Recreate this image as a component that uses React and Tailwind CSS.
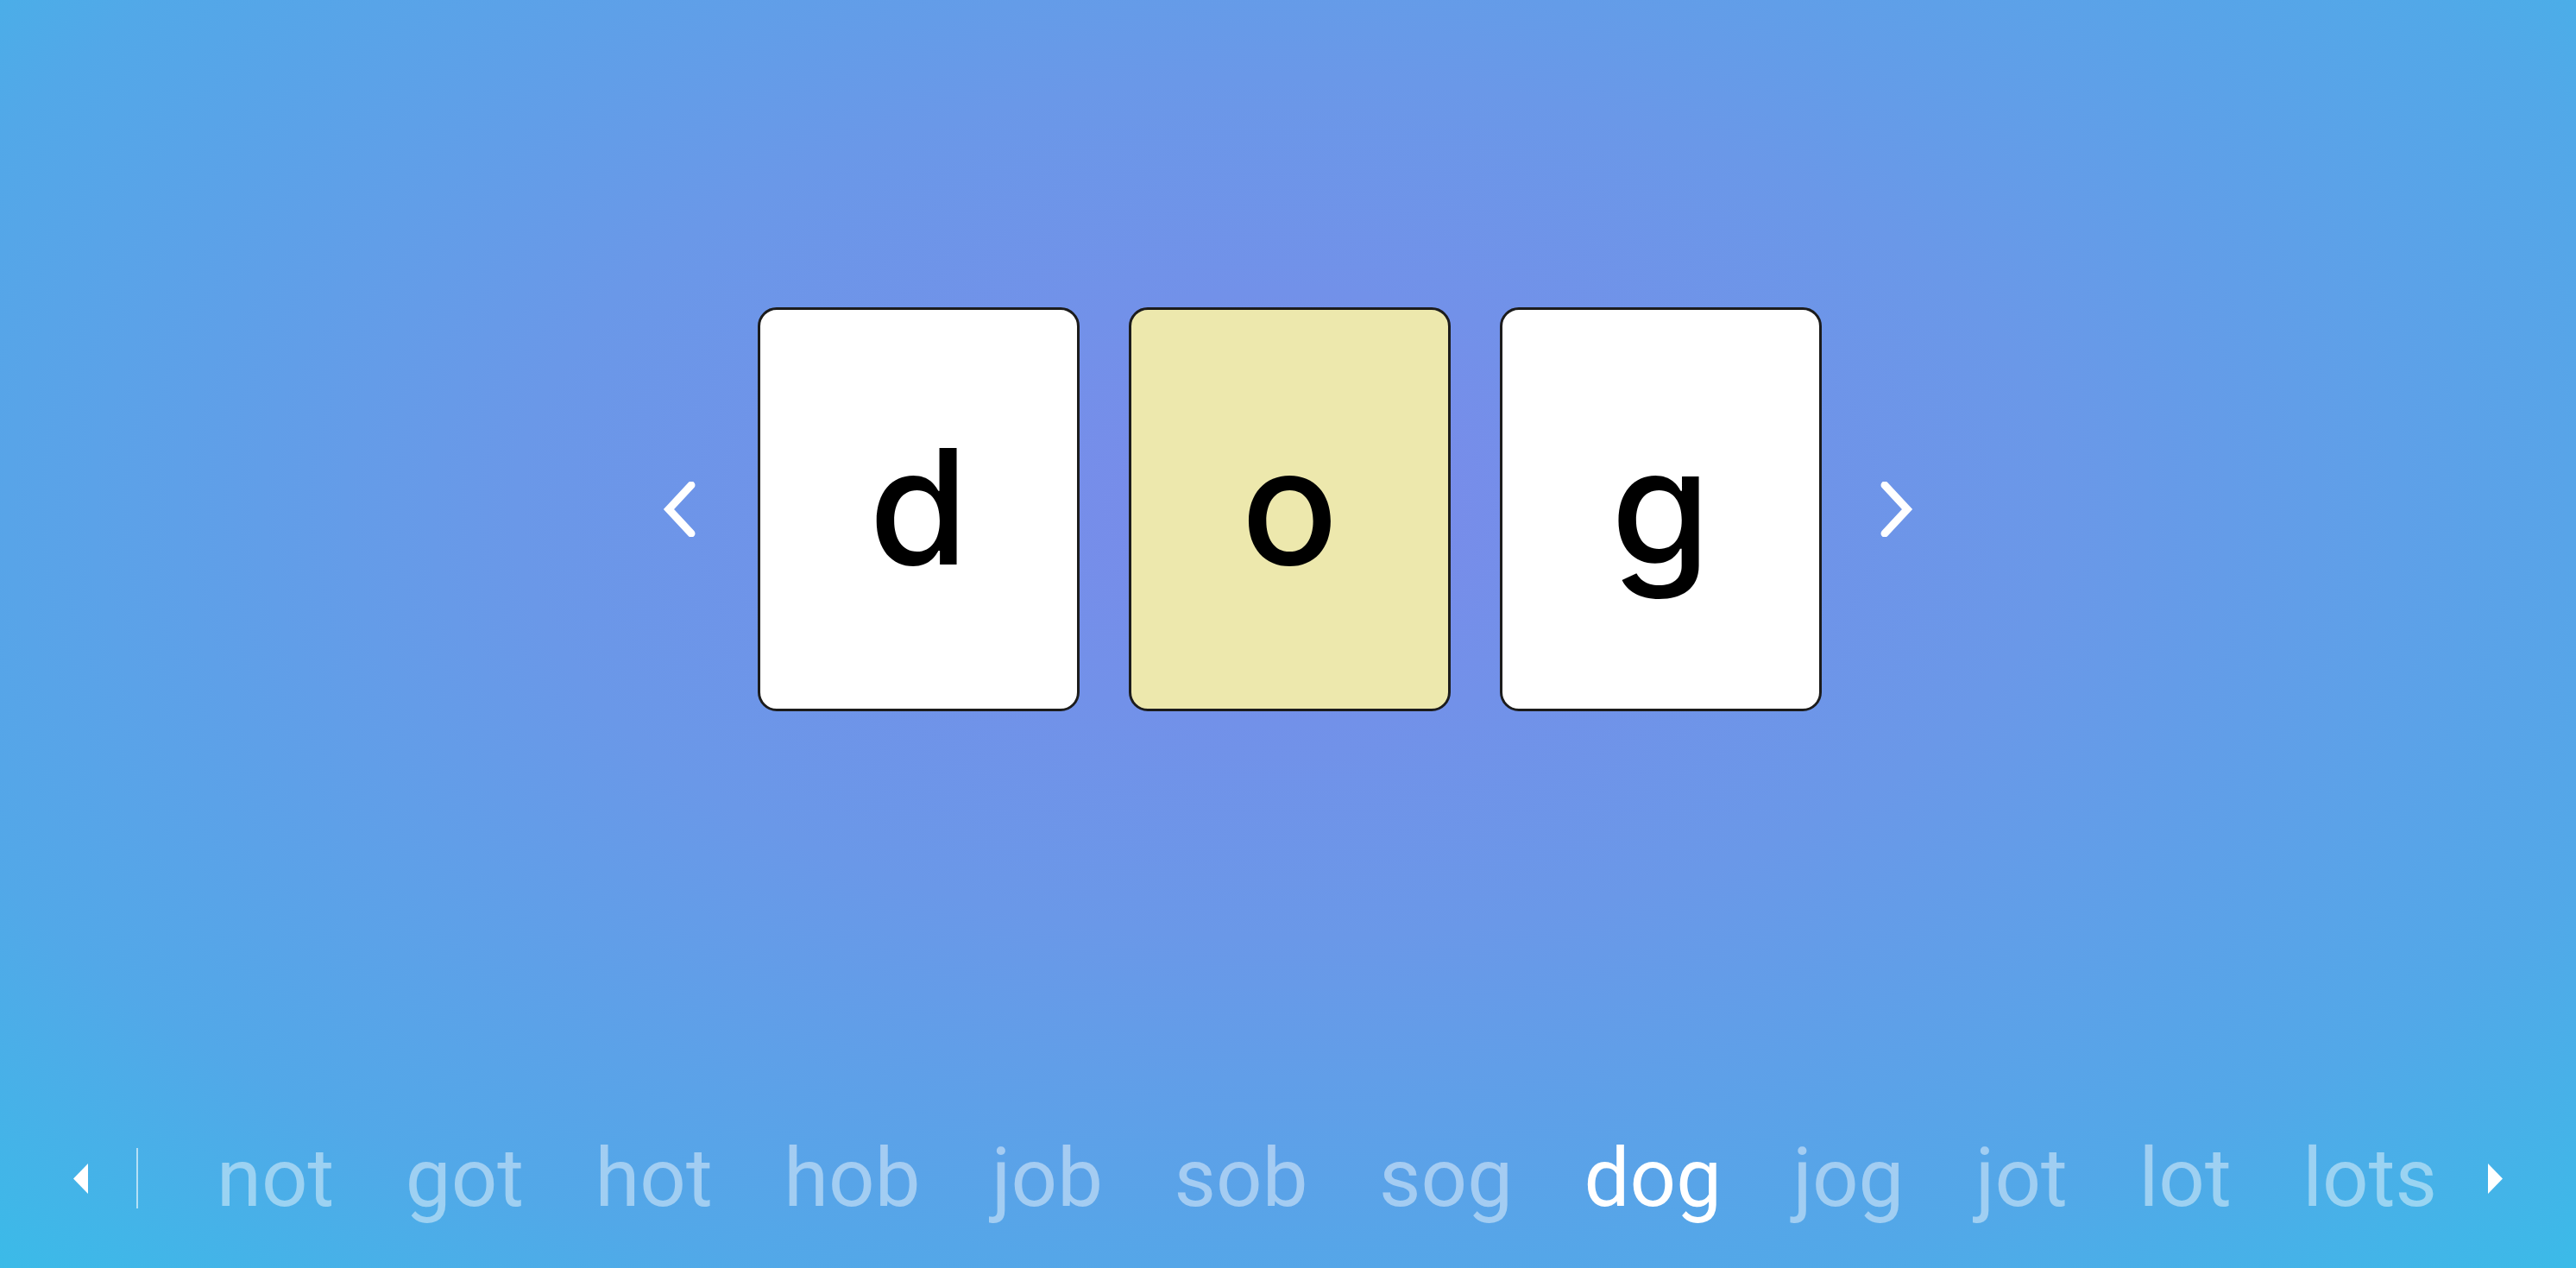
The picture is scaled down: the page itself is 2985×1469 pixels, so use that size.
import React, { useState } from 'react'

const words = ['not', 'got', 'hot', 'hob', 'job', 'sob', 'sog', 'dog', 'jog', 'jot', 'lot', 'lots']

function Chevron({ dir }) {
  const pts = dir === 'left' ? '33,4 7,32 33,60' : '7,4 33,32 7,60'
  return (
    <svg width="40" height="64" viewBox="0 0 40 64" className="shrink-0">
      <polyline points={pts} fill="none" stroke="white" strokeWidth="9" strokeLinecap="round" strokeLinejoin="miter" />
    </svg>
  )
}

function Arrow({ dir }) {
  const pts = dir === 'left' ? '17,0 0,17.5 17,35' : '0,0 17,17.5 0,35'
  return (
    <svg width="17" height="35" viewBox="0 0 17 35" className="shrink-0">
      <polygon points={pts} fill="white" />
    </svg>
  )
}

function Card({ letter, active }) {
  return (
    <div
      className={`w-[373px] h-[468px] rounded-[22px] border-[3px] border-[#1c1c1c] flex items-center justify-center ${active ? 'bg-[#ede8ad]' : 'bg-white'}`}
    >
      <span className="text-[186px] leading-none font-medium text-black font-['Inter',sans-serif] -mt-[6px]">{letter}</span>
    </div>
  )
}

export default function App() {
  const [current] = useState('dog')
  const letters = current.split('')

  return (
    <div className="w-full h-[1469px] flex flex-col overflow-hidden bg-[radial-gradient(ellipse_75%_85%_at_50%_40%,#7a8aea_0%,#6a98e8_40%,#52a8e8_75%,#38bde8_100%)]">
      <div className="h-[1180px] flex items-center justify-center">
        <div className="flex items-center">
          <Chevron dir="left" />
          <div className="flex gap-[57px] ml-[70px] mr-[66px]">
            {letters.map((l, i) => (
              <Card key={i} letter={l} active={i === 1} />
            ))}
          </div>
          <Chevron dir="right" />
        </div>
      </div>

      <div className="mt-[115px] h-[140px] flex items-center pl-[85px] pr-[85px] font-['Roboto',sans-serif]">
        <Arrow dir="left" />
        <div className="ml-[56px] w-[2px] h-[70px] bg-white/60"></div>
        <div className="flex-1 flex justify-between ml-[91px] mr-[59px]">
          {words.map((w) => (
            <span key={w} className={`text-[94px] leading-none ${w === current ? 'text-white' : 'text-white/45'}`}>
              {w}
            </span>
          ))}
        </div>
        <Arrow dir="right" />
      </div>
    </div>
  )
}
